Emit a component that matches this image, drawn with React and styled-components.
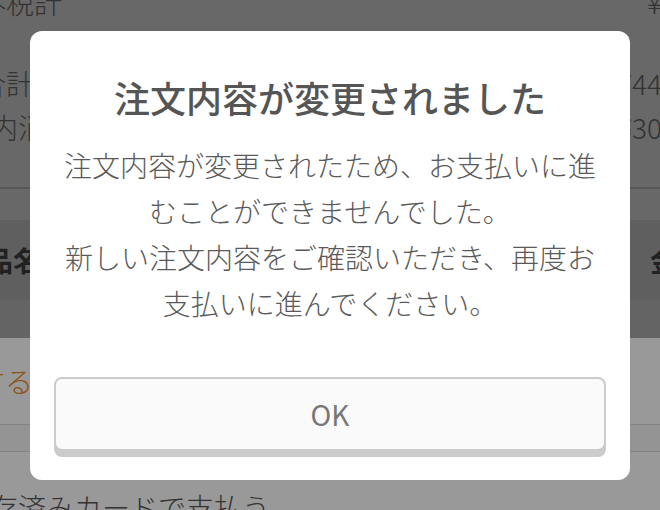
import React from "react";
import styled, { createGlobalStyle } from "styled-components";

const GlobalStyle = createGlobalStyle`
html, body {
  margin:0;
  padding:0;
  overflow:hidden;
  width:660px;
  height:510px;
  background:#fff;
  font-family:"Noto Sans CJK JP","Noto Sans",sans-serif;
}
`;

// page behind the dialog (cropped on the left and right, like the reference)
const Page = styled.div`
width:800px;
margin:-20px 0 0 -80px;
color:#555;
font-size:28px;
font-weight:300;
`;

const Summary = styled.div`
background:#adadad;
`;

const SumGroup = styled.div`
margin-top:${(p) => p.gap || 0}px;
padding-bottom:${(p) => p.bottom || 0}px;
border-bottom:${(p) => (p.bottom ? "2px solid #919191" : "none")};
`;

const SumRow = styled.div`
display:flex;
justify-content:space-between;
align-items:center;
height:44px;
padding:0 43px 0 ${(p) => p.indent}px;
`;

const Band = styled.div`
height:${(p) => p.h}px;
background:${(p) => p.bg};
`;

const HeaderRow = styled.div`
display:flex;
justify-content:space-between;
align-items:center;
height:80px;
padding:0 14px 0 37px;
background:#9e9e9e;
color:#383838;
font-weight:700;
`;

const LinkRow = styled.div`
display:flex;
align-items:center;
height:86px;
padding-left:1px;
border-bottom:1px solid #d9d9d9;
color:#ee8a2a;
`;

const Spacer = styled.div`
height:26px;
background:#f7f7f7;
border-bottom:1px solid #d9d9d9;
`;

const PayRow = styled.div`
padding:33px 0 0 42px;
line-height:44px;
color:#555;
`;

// dialog
const Overlay = styled.div`
position:fixed;
inset:0;
background:rgba(0,0,0,0.4);
display:flex;
align-items:center;
justify-content:center;
`;

const Dialog = styled.div`
width:600px;
box-sizing:border-box;
padding:39px 24px 29px;
background:#fff;
border-radius:12px;
text-align:center;
`;

const Title = styled.h2`
margin:0;
font-size:36px;
line-height:54px;
font-weight:500;
color:#555;
`;

const Message = styled.div`
margin-top:18px;
padding:0 8px;
font-size:28px;
line-height:46px;
font-weight:300;
color:#5a5a5a;
p{
  margin:0;
}
`;

const OkButton = styled.button`
display:block;
width:100%;
height:74px;
margin-top:51px;
background:#fafafa;
border:2px solid #cbcbcb;
border-radius:8px;
box-shadow:0 6px 0 #cbcbcb;
font-family:"Noto Sans CJK JP","Noto Sans",sans-serif;
font-size:28px;
font-weight:400;
color:#777;
cursor:pointer;
`;

function App() {
  return (
    <>
      <GlobalStyle />
      <Page>
        <Summary>
          <SumGroup>
            <SumRow indent={58}>
              <span>外税計</span>
              <span>¥0</span>
            </SumRow>
          </SumGroup>
          <SumGroup gap={37} bottom={38}>
            <SumRow indent={58}>
              <span>合計</span>
              <span>¥440</span>
            </SumRow>
            <SumRow indent={70}>
              <span>内消費税</span>
              <span>¥300</span>
            </SumRow>
          </SumGroup>
          <Band h={31} bg="#adadad" />
        </Summary>
        <HeaderRow>
          <span>商品名</span>
          <span>金額</span>
        </HeaderRow>
        <Band h={38} bg="#a7a7a7" />
        <LinkRow>変更する</LinkRow>
        <Spacer />
        <PayRow>保存済みカードで支払う</PayRow>
      </Page>
      <Overlay>
        <Dialog>
          <Title>注文内容が変更されました</Title>
          <Message>
            <p>注文内容が変更されたため、お支払いに進むことができませんでした。</p>
            <p>新しい注文内容をご確認いただき、再度お支払いに進んでください。</p>
          </Message>
          <OkButton>OK</OkButton>
        </Dialog>
      </Overlay>
    </>
  );
}

export default App;
